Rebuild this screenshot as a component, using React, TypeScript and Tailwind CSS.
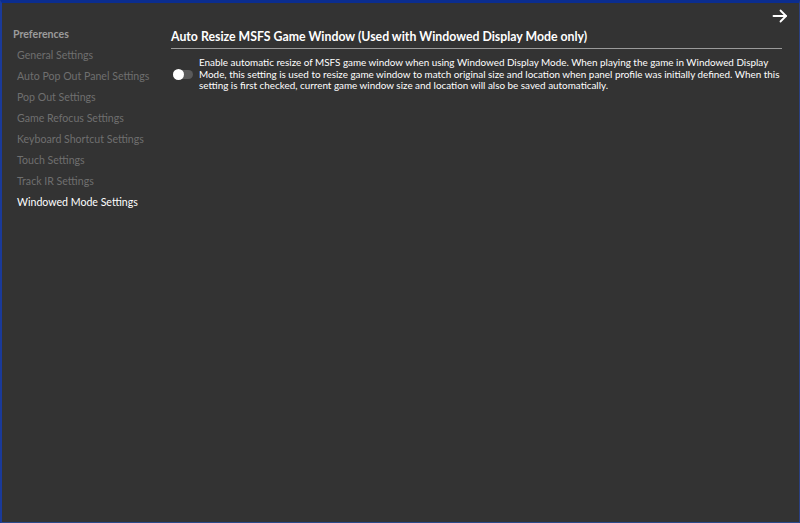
import React, { useState } from 'react'

const menuItems: string[] = [
    "General Settings",
    "Auto Pop Out Panel Settings",
    "Pop Out Settings",
    "Game Refocus Settings",
    "Keyboard Shortcut Settings",
    "Touch Settings",
    "Track IR Settings",
    "Windowed Mode Settings",
];

const App: React.FC = () =>
{
    const [selected, setSelected] = useState<string>("Windowed Mode Settings");
    const [autoResize, setAutoResize] = useState<boolean>(false);

    return (
        <div className="w-[800px] h-[523px] flex flex-col bg-[#333333] border-t-[3px] border-l-2 border-r border-b border-t-[#0b2d8f] border-l-[#1a3a9a] border-r-[#2a3f80] border-b-[#2b4a8a] text-[11px]"
             style={{ fontFamily: '"Segoe UI", Lato, sans-serif' }}>

            {/* Title strip with the close arrow */}
            <div className="flex justify-end h-[22px] pr-[11px] pt-[6px]">
                <svg width="16" height="14" viewBox="0 0 16 14" fill="none" stroke="white" strokeWidth="1.8" strokeLinecap="round" strokeLinejoin="round">
                    <path d="M1.5 7H14"/>
                    <path d="M8.5 1.5L14 7L8.5 12.5"/>
                </svg>
            </div>

            <div className="flex grow">
                {/* Preferences menu */}
                <div className="flex flex-col w-[169px] shrink-0 pl-[11px] text-[10.6px] -mt-[2px]">
                    <label className="font-bold text-[#9b9b9b] leading-[21px] mt-[1px]">Preferences</label>
                    {menuItems.map((item) => (
                        <div key={item}
                             onClick={() => setSelected(item)}
                             className={"pl-[4px] leading-[21px] cursor-pointer whitespace-nowrap " + (item === selected ? "text-white" : "text-[#6f6f6f]")}>
                            {item}
                        </div>
                    ))}
                </div>

                {/* Settings content */}
                <div className="flex flex-col grow pr-[17px]">
                    <div className="font-bold text-white text-[12.3px] leading-[16px] mt-[4px] pb-[3px] border-b border-[#9a9a9a]">
                        Auto Resize MSFS Game Window (Used with Windowed Display Mode only)
                    </div>

                    <div className="flex items-center mt-[8px]">
                        <button onClick={() => setAutoResize(!autoResize)}
                                className={"relative w-[20px] h-[9px] rounded-full ml-[2px] mr-[6px] shrink-0 " + (autoResize ? "bg-[#2f7de0]" : "bg-[#5a5a5a]")}>
                            <span className={"absolute top-[-1px] w-[11px] h-[11px] rounded-full bg-white " + (autoResize ? "left-[9px]" : "left-0")}/>
                        </button>
                        <p className="text-white text-[9.9px] leading-[11.5px]">
                            Enable automatic resize of MSFS game window when using Windowed Display Mode. When playing the game in Windowed Display Mode, this setting is used to resize game window to match original size and location when panel profile was initially defined. When this setting is first checked, current game window size and location will also be saved automatically.
                        </p>
                    </div>
                </div>
            </div>
        </div>
    )
}

export default App
